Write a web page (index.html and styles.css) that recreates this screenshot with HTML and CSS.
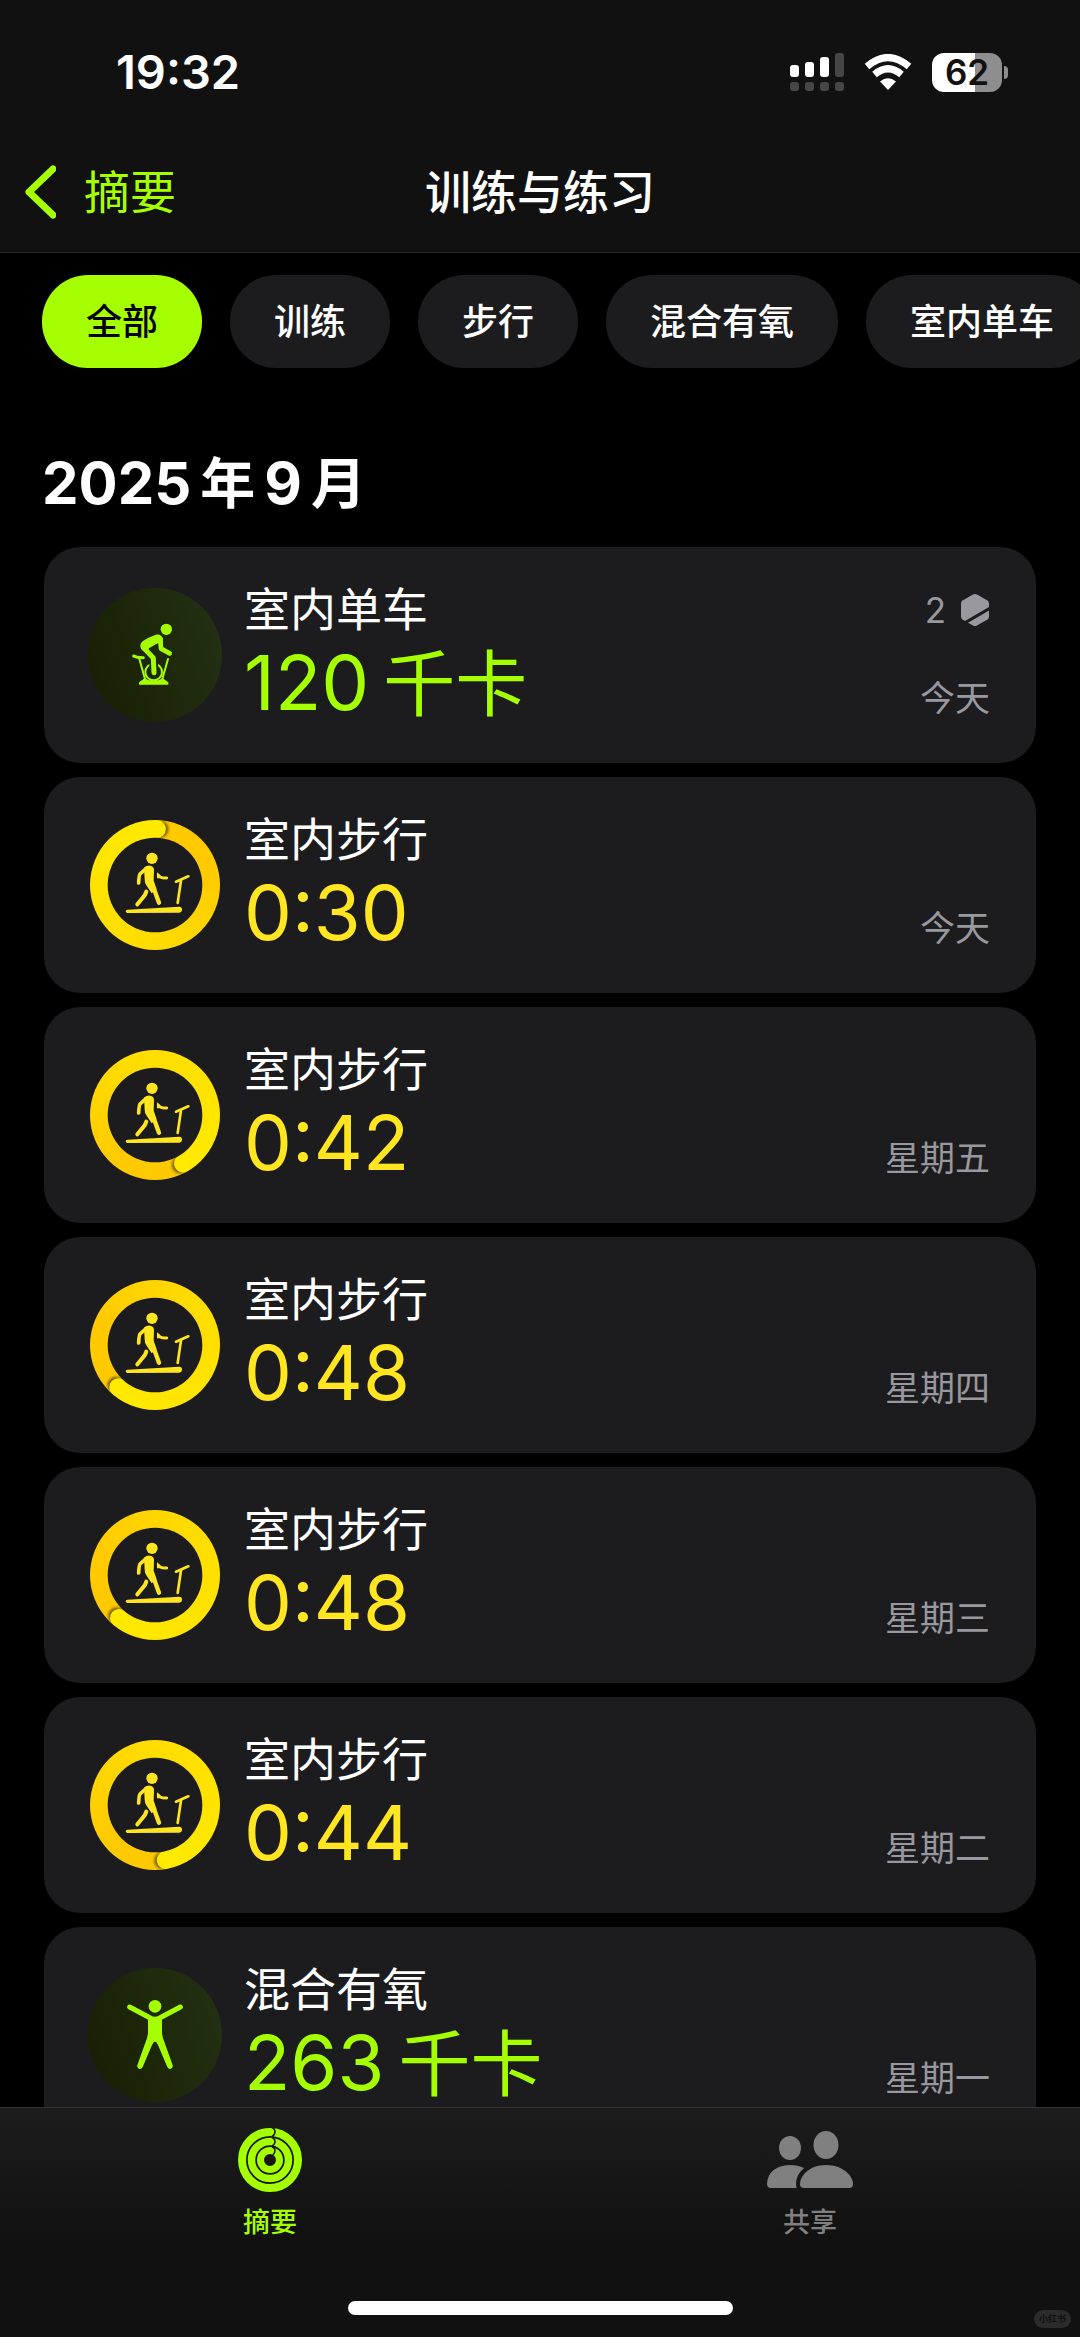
FILE: index.html
```html
<!DOCTYPE html>
<html lang="zh-CN">
<head>
    <meta charset="UTF-8">
    <meta name="viewport" content="width=device-width, initial-scale=1.0">
    <title>训练与练习</title>
    <link rel="stylesheet" href="styles.css">
</head>
<body>
    <!-- shared icons -->
    <svg class="sprite" aria-hidden="true">
        <defs>
            <filter id="soft" x="-50%" y="-50%" width="200%" height="200%">
                <feGaussianBlur stdDeviation="5"/>
            </filter>
            <clipPath id="ring-clip">
                <circle cx="225" cy="255" r="195"/>
            </clipPath>
        </defs>
        <symbol id="treadmill" viewBox="30 60 390 390">
            <g fill="none" stroke="#ffe620" stroke-linecap="round" stroke-linejoin="round">
                <path stroke-width="11" d="M199 205 L180 222 Q177 226 176 249"/>
                <path stroke-width="12" d="M199 275 Q196 285 190 291 L172 313"/>
                <path stroke-width="13" d="M208 248 L224 272 L237 308"/>
                <path stroke-width="9" d="M235 225 Q240 232 247 233 L260 234"/>
                <path stroke-width="8" d="M288 245 L325 229"/>
                <path stroke-width="8" d="M303 241 L293 309"/>
            </g>
            <g fill="#ffe620">
                <circle cx="216" cy="175" r="17"/>
                <path d="M192 203 Q203 194 214 198 Q222 201 222 211 L221 242 L230 268 L215 280 L199 256 Q194 249 194 238 Z"/>
                <path d="M231 216 L231 235 L245 235 Z"/>
                <path d="M142 329 L298 320 Q306 320 306 328 Q306 338 298 338 L142 339 Q137 338 137 334 Q137 330 142 329 Z"/>
            </g>
        </symbol>
    </svg>

    <header class="header">
        <div class="status">
            <span class="time">19:32</span>
            <div class="status-icons">
                <svg width="54" height="40" viewBox="0 0 54 40" fill="#fff" aria-hidden="true">
                    <rect x="0" y="13" width="9" height="12" rx="3"/>
                    <rect x="15" y="10" width="9" height="15" rx="3"/>
                    <rect x="30" y="5" width="9" height="20" rx="3"/>
                    <g fill="#464646">
                        <rect x="45" y="1" width="9" height="24" rx="3"/>
                        <rect x="0" y="30" width="9" height="9" rx="3"/>
                        <rect x="15" y="30" width="9" height="9" rx="3"/>
                        <rect x="30" y="30" width="9" height="9" rx="3"/>
                        <rect x="45" y="30" width="9" height="9" rx="3"/>
                    </g>
                </svg>
                <svg width="48" height="36" viewBox="0 0 48 36" aria-hidden="true">
                    <g fill="none" stroke="#fff" stroke-width="7">
                        <path d="M3 12.5 Q24 -5.500 45 12.500"/>
                        <path d="M10.500 20.500 Q24 9 37.500 20.500"/>
                    </g>
                    <path fill="#fff" d="M24 36 L16 27.500 Q24 21 32 27.500 Z"/>
                </svg>
                <div class="battery"><span class="battery-level">62</span></div>
            </div>
        </div>
        <nav class="nav">
            <a class="back" href="#">
                <svg width="32" height="54" viewBox="0 0 32 54" aria-hidden="true">
                    <path d="M29 4 L5 27 L29 50" fill="none" stroke="#a6ff00" stroke-width="7" stroke-linecap="round" stroke-linejoin="round"/>
                </svg>
                摘要
            </a>
            <h1 class="title">训练与练习</h1>
        </nav>
    </header>

    <main class="content">
        <div class="chips">
            <button class="chip active" type="button">全部</button>
            <button class="chip" type="button">训练</button>
            <button class="chip" type="button">步行</button>
            <button class="chip" type="button">混合有氧</button>
            <button class="chip" type="button">室内单车</button>
        </div>

        <h2 class="month"><span>2025</span><span class="cjk">年</span><span>9</span><span class="cjk">月</span></h2>

        <ul class="list">
            <li class="card">
                <div class="badge">
                    <svg viewBox="24 54 402 402" aria-hidden="true">
                        <g fill="none" stroke="#a6ff00" stroke-linecap="round" stroke-linejoin="round">
                            <circle cx="221" cy="306" r="25" stroke-width="6"/>
                            <path stroke="#1d270f" stroke-width="26" stroke-linecap="butt" d="M221 270 V308"/>
                            <path stroke-width="14" d="M241 207 L243 236 L269 250"/>
                            <path stroke-width="15" d="M193 235 L220 264 L222 308"/>
                            <path stroke-width="9" d="M161 258 L172 262 L190 263"/>
                            <path stroke-width="6" d="M178 266 L195 327"/>
                            <path stroke-width="6" d="M264 267 L247 327"/>
                        </g>
                        <g fill="#a6ff00">
                            <circle cx="259" cy="178" r="17"/>
                            <path d="M188 214 Q206 201 228 194 Q246 192 249 208 L247 224 L233 220 L208 234 L196 248 L184 238 Q176 224 188 214 Z"/>
                            <path d="M177 337 L194 325 Q221 342 248 325 L265 337 V344 H177 Z"/>
                        </g>
                    </svg>
                </div>
                <div class="info">
                    <h3 class="name">室内单车</h3>
                    <p class="value green">120<span class="unit">千卡</span></p>
                </div>
                <div class="meta">
                    <span class="count">2
                        <svg width="30" height="34" viewBox="0 0 30 34" fill="#98989e" aria-hidden="true">
                            <path d="M13 1.500 Q15 .5 17 1.500 L27.500 7.500 Q29 8.500 29 10.500 V14 L5 28 L2.500 26.500 Q1 25.500 1 23.500 V10.500 Q1 8.500 2.500 7.500 Z"/>
                            <path d="M29 17.500 V23.500 Q29 25.500 27.500 26.500 L17 32.500 Q15 33.500 13 32.500 L8 29.700 Z"/>
                        </svg>
                    </span>
                    <span class="date">今天</span>
                </div>
            </li>

            <li class="card">
                <div class="ring" style="--end: 2deg">
                    <svg viewBox="30 60 390 390" aria-hidden="true">
                        <g clip-path="url(#ring-clip)"><g class="cap"><circle class="cap-shadow" cx="234" cy="87" r="25"/><circle class="cap-end" cx="225" cy="87" r="27"/></g></g>
                        <circle class="hole" cx="225" cy="255" r="142"/>
                        <use href="#treadmill" x="30" y="60" width="390" height="390"/>
                    </svg>
                </div>
                <div class="info">
                    <h3 class="name">室内步行</h3>
                    <p class="value yellow">0:30</p>
                </div>
                <div class="meta"><span class="date">今天</span></div>
            </li>

            <li class="card">
                <div class="ring" style="--end: 150deg">
                    <svg viewBox="30 60 390 390" aria-hidden="true">
                        <g clip-path="url(#ring-clip)"><g class="cap"><circle class="cap-shadow" cx="234" cy="87" r="25"/><circle class="cap-end" cx="225" cy="87" r="27"/></g></g>
                        <circle class="hole" cx="225" cy="255" r="142"/>
                        <use href="#treadmill" x="30" y="60" width="390" height="390"/>
                    </svg>
                </div>
                <div class="info">
                    <h3 class="name">室内步行</h3>
                    <p class="value yellow">0:42</p>
                </div>
                <div class="meta"><span class="date">星期五</span></div>
            </li>

            <li class="card">
                <div class="ring" style="--end: 221deg">
                    <svg viewBox="30 60 390 390" aria-hidden="true">
                        <g clip-path="url(#ring-clip)"><g class="cap"><circle class="cap-shadow" cx="234" cy="87" r="25"/><circle class="cap-end" cx="225" cy="87" r="27"/></g></g>
                        <circle class="hole" cx="225" cy="255" r="142"/>
                        <use href="#treadmill" x="30" y="60" width="390" height="390"/>
                    </svg>
                </div>
                <div class="info">
                    <h3 class="name">室内步行</h3>
                    <p class="value yellow">0:48</p>
                </div>
                <div class="meta"><span class="date">星期四</span></div>
            </li>

            <li class="card">
                <div class="ring" style="--end: 220deg">
                    <svg viewBox="30 60 390 390" aria-hidden="true">
                        <g clip-path="url(#ring-clip)"><g class="cap"><circle class="cap-shadow" cx="234" cy="87" r="25"/><circle class="cap-end" cx="225" cy="87" r="27"/></g></g>
                        <circle class="hole" cx="225" cy="255" r="142"/>
                        <use href="#treadmill" x="30" y="60" width="390" height="390"/>
                    </svg>
                </div>
                <div class="info">
                    <h3 class="name">室内步行</h3>
                    <p class="value yellow">0:48</p>
                </div>
                <div class="meta"><span class="date">星期三</span></div>
            </li>

            <li class="card">
                <div class="ring" style="--end: 169deg">
                    <svg viewBox="30 60 390 390" aria-hidden="true">
                        <g clip-path="url(#ring-clip)"><g class="cap"><circle class="cap-shadow" cx="234" cy="87" r="25"/><circle class="cap-end" cx="225" cy="87" r="27"/></g></g>
                        <circle class="hole" cx="225" cy="255" r="142"/>
                        <use href="#treadmill" x="30" y="60" width="390" height="390"/>
                    </svg>
                </div>
                <div class="info">
                    <h3 class="name">室内步行</h3>
                    <p class="value yellow">0:44</p>
                </div>
                <div class="meta"><span class="date">星期二</span></div>
            </li>

            <li class="card">
                <div class="badge">
                    <svg viewBox="24 54 402 402" aria-hidden="true">
                        <g fill="none" stroke="#a6ff00" stroke-width="15" stroke-linecap="round" stroke-linejoin="round">
                            <path d="M149 171 L211 204"/>
                            <path d="M301 171 L239 204"/>
                        </g>
                        <g fill="#a6ff00">
                            <circle cx="225" cy="169" r="19"/>
                            <path d="M204 196 Q225 204 246 196 L246 250 Q247 262 254 278 L278 346 Q280 354 272 357 Q265 358 262 351 L234 285 Q225 264 216 285 L188 351 Q185 358 178 357 Q170 354 172 346 L196 278 Q203 262 204 250 Z"/>
                        </g>
                    </svg>
                </div>
                <div class="info">
                    <h3 class="name">混合有氧</h3>
                    <p class="value green">263<span class="unit">千卡</span></p>
                </div>
                <div class="meta"><span class="date">星期一</span></div>
            </li>
        </ul>
    </main>

    <footer class="tabbar">
        <nav class="tabs">
            <a class="tab selected" href="#">
                <svg width="66" height="66" viewBox="0 0 66 66" aria-hidden="true">
                    <g fill="none" stroke="#a6ff00">
                        <circle cx="33" cy="33" r="28" stroke-width="8"/>
                        <circle cx="33" cy="33" r="18.500" stroke-width="7.500"/>
                        <circle cx="33" cy="33" r="9.500" stroke-width="7"/>
                    </g>
                    <g fill="none" stroke="#191919" stroke-width="1.500">
                        <path d="M35 0.500 Q38 1.500 38 5 Q38 8 35 9.500"/>
                        <path d="M35 10.500 Q38 11.500 38 14.500 Q38 17.500 35 19"/>
                        <path d="M35 20 Q38 20.500 38 23.500 Q38 25.500 36 28"/>
                    </g>
                </svg>
                <span>摘要</span>
            </a>
            <a class="tab" href="#">
                <svg width="88" height="66" viewBox="0 0 88 66" fill="#808080" aria-hidden="true">
                    <ellipse cx="24" cy="21" rx="11" ry="12"/>
                    <ellipse cx="60" cy="18" rx="12.500" ry="14"/>
                    <path d="M24 38 Q32 38 38 41 Q30 48 30 57 L30.500 61 H5 Q1 61 1 57 Q2 39 24 38 Z"/>
                    <path d="M60 38 C77 38 87 49 87 57 Q87 61 83 61 H38 Q34 61 34 57 C34 49 43 38 60 38 Z"/>
                </svg>
                <span>共享</span>
            </a>
        </nav>
        <div class="home-bar"></div>
        <span class="watermark">小红书</span>
    </footer>
</body>
</html>
```
FILE: styles.css
```css
* {
    box-sizing: border-box;
}

:root {
    --green: #a6ff00;
    --yellow: #ffe620;
    --card: #1c1c1e;
    --gray: #98989e;
}

body {
    display: flex;
    flex-direction: column;
    height: 100vh;
    margin: 0;
    background: #000;
    color: #fff;
    font-family: Inter, "Noto Sans CJK SC", sans-serif;
    overflow: hidden;
}

h1, h2, h3, p, ul {
    margin: 0;
    padding: 0;
    font-weight: 400;
}

a {
    color: inherit;
    text-decoration: none;
}

svg {
    display: block;
}

.sprite {
    position: absolute;
    width: 0;
    height: 0;
}

/* header */

.header {
    flex: none;
    background: #111;
    border-bottom: 1px solid #262626;
}

.status {
    display: flex;
    justify-content: space-between;
    align-items: center;
    padding: 40px 78px 28px 116px;
}

.time {
    font-size: 47px;
    font-weight: 600;
    line-height: 64px;
}

.status-icons {
    display: flex;
    align-items: center;
    gap: 20px;
}

.battery {
    position: relative;
    width: 70px;
    height: 39px;
    border-radius: 12px;
    background: linear-gradient(to right, #fff 62%, #8e8e8e 62%);
    color: #111;
    font-size: 35px;
    font-weight: 600;
    line-height: 39px;
    text-align: center;
}

.battery::after {
    content: "";
    position: absolute;
    top: 13px;
    right: -6px;
    width: 4px;
    height: 13px;
    border-radius: 0 4px 4px 0;
    background: #8e8e8e;
}

.nav {
    display: grid;
    grid-template-columns: 1fr auto 1fr;
    align-items: center;
    height: 120px;
    padding: 0 24px;
}

.back {
    display: flex;
    align-items: center;
    gap: 28px;
    color: var(--green);
    font-size: 46px;
    line-height: 60px;
}

.title {
    font-size: 46px;
    font-weight: 500;
    line-height: 60px;
}

/* content */

.content {
    flex: 1;
    min-height: 0;
    overflow: hidden;
}

.chips {
    display: flex;
    gap: 28px;
    padding: 22px 42px 75px;
}

.chip {
    flex: none;
    padding: 21px 44px 19px;
    border: none;
    border-radius: 46px;
    background: var(--card);
    color: #fff;
    font-family: inherit;
    font-size: 36px;
    font-weight: 500;
    line-height: 53px;
    cursor: pointer;
}

.chip.active {
    background: var(--green);
    color: #000;
}

.month {
    display: flex;
    gap: 9px;
    padding: 0 42px 24px;
    font-size: 58px;
    font-weight: 700;
    line-height: 80px;
}

.month .cjk {
    font-size: 55px;
}

.list {
    display: flex;
    flex-direction: column;
    gap: 14px;
    padding: 0 44px;
    list-style: none;
}

.card {
    display: flex;
    align-items: center;
    gap: 22px;
    padding: 35px 46px 35px 44px;
    border-radius: 36px;
    background: var(--card);
}

.badge {
    width: 134px;
    height: 134px;
    border-radius: 50%;
    background: linear-gradient(70deg, #181d02, #243214);
}

.ring {
    width: 130px;
    height: 130px;
    margin: 0 2px;
    border-radius: 50%;
    background: conic-gradient(from var(--end), #ffc800, #ffcb00 20%, #ffdc00 50%, #ffea00);
}

.cap {
    transform: rotate(var(--end));
    transform-origin: 225px 255px;
}

.cap-shadow {
    fill: #6b5200;
    filter: url(#soft);
}

.cap-end {
    fill: #ffea00;
}

.hole {
    fill: var(--card);
}

.info {
    flex: 1;
}

.name {
    font-size: 46px;
    line-height: 54px;
}

.value {
    font-size: 76px;
    line-height: 92px;
}

.green {
    color: var(--green);
}

.yellow {
    color: var(--yellow);
}

.unit {
    margin-left: 14px;
    font-size: 72px;
    line-height: 1;
}

.meta {
    display: flex;
    flex-direction: column;
    align-items: flex-end;
    align-self: stretch;
    color: var(--gray);
    font-size: 35px;
}

.count {
    display: flex;
    align-items: center;
    gap: 14px;
    line-height: 56px;
}

.date {
    margin-top: auto;
    line-height: 60px;
}

/* bottom tabs */

.tabbar {
    position: relative;
    flex: none;
    padding-bottom: 22px;
    border-top: 1px solid #333;
    background: linear-gradient(#1c1c1c, #111 60%);
}

.tabs {
    display: flex;
    padding: 19px 0 58px;
}

.tab {
    flex: 1;
    display: flex;
    flex-direction: column;
    align-items: center;
    gap: 10px;
    color: #808080;
    font-size: 27px;
    font-weight: 500;
    line-height: 40px;
}

.tab.selected {
    color: var(--green);
}

.home-bar {
    width: 36%;
    max-width: 385px;
    height: 14px;
    margin: 0 auto;
    border-radius: 7px;
    background: #fff;
}

.watermark {
    position: absolute;
    right: 9px;
    bottom: 9px;
    padding: 0 5px;
    border-radius: 9px;
    background: #2b2b2b;
    color: #111;
    font-size: 9px;
    font-weight: 700;
    line-height: 18px;
}
```
